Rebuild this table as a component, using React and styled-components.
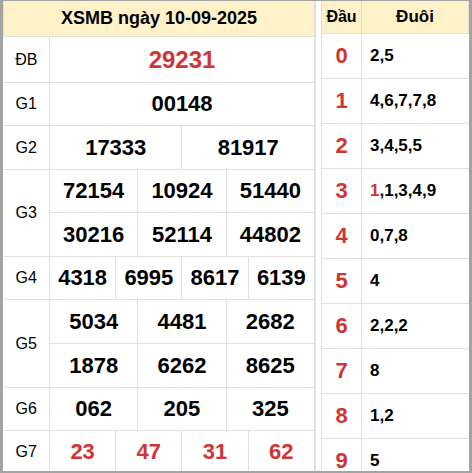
import React from "react";
import styled, { createGlobalStyle } from "styled-components";

const GlobalStyle = createGlobalStyle`
  html, body {
    margin: 0;
    padding: 0;
    background: #fff;
  }
  body {
    font-family: "Liberation Sans", Arial, sans-serif;
    color: #000;
  }
`;

const Frame = styled.div`
  box-sizing: border-box;
  width: 472px;
  height: 473px;
  overflow: hidden;
  border-style: solid;
  border-color: #a3a3a3;
  border-width: 1px 3px 2px 3px;
  display: flex;
  align-items: flex-start;
  gap: 5px;
  background: #fff;
`;

const LeftPanel = styled.div`
  width: 312px;
  flex: none;
  border-right: 1px solid #e2dfda;
`;

const Table = styled.table`
  width: ${(p) => p.$width}px;
  table-layout: fixed;
  border-collapse: collapse;
  flex: none;
`;

const LabelCol = styled.col`
  width: ${(p) => p.$width}px;
`;

const HeadCell = styled.th`
  background: #fff2c8;
  height: ${(p) => p.$height}px;
  padding: 0;
  font-size: ${(p) => p.$size || 18}px;
  font-weight: 700;
  text-align: center;
  border: 1px solid #e2dfda;
  border-top: none;
`;

const Row = styled.tr`
  height: ${(p) => p.$height}px;
`;

const Label = styled.td`
  padding: 0;
  text-align: center;
  font-size: 16px;
  border: 1px solid #e2dfda;
  border-left: none;
`;

const Num = styled.td`
  padding: 0;
  text-align: center;
  font-size: ${(p) => (p.$special ? 24 : 22)}px;
  font-weight: 700;
  color: ${(p) => (p.$red ? "#d03434" : "#000")};
  border: 1px solid #e2dfda;
`;

const Head = styled.td`
  padding: 0;
  text-align: center;
  font-size: 22px;
  font-weight: 700;
  color: #d03434;
  border: 1px solid #e2dfda;
`;

const Tail = styled.td`
  padding: 0 0 0 8px;
  text-align: left;
  font-size: 17px;
  font-weight: 700;
  border: 1px solid #e2dfda;
  border-right: none;
`;

const Red = styled.span`
  color: #d03434;
`;

const prizes = [
  { label: "ĐB", lines: [["29231"]], heights: [46], special: true, red: true },
  { label: "G1", lines: [["00148"]], heights: [43] },
  { label: "G2", lines: [["17333", "81917"]], heights: [44] },
  {
    label: "G3",
    lines: [
      ["72154", "10924", "51440"],
      ["30216", "52114", "44802"],
    ],
    heights: [43, 44],
  },
  { label: "G4", lines: [["4318", "6995", "8617", "6139"]], heights: [43] },
  {
    label: "G5",
    lines: [
      ["5034", "4481", "2682"],
      ["1878", "6262", "8625"],
    ],
    heights: [44, 44],
  },
  { label: "G6", lines: [["062", "205", "325"]], heights: [43] },
  { label: "G7", lines: [["23", "47", "31", "62"]], heights: [43], red: true },
];

const tails = [
  "2,5",
  "4,6,7,7,8",
  "3,4,5,5",
  [<Red key="r">1</Red>, ",1,3,4,9"],
  "0,7,8",
  "4",
  "2,2,2",
  "8",
  "1,2",
  "5",
];

function ResultTable() {
  return (
    <Table $width={312}>
      <colgroup>
        <LabelCol $width={46} />
        {Array.from({ length: 12 }).map((_, i) => (
          <col key={i} />
        ))}
      </colgroup>
      <thead>
        <tr>
          <HeadCell colSpan={13} $height={35}>
            XSMB ngày 10-09-2025
          </HeadCell>
        </tr>
      </thead>
      <tbody>
        {prizes.map((p) =>
          p.lines.map((nums, li) => (
            <Row key={p.label + li} $height={p.heights[li]}>
              {li === 0 && <Label rowSpan={p.lines.length}>{p.label}</Label>}
              {nums.map((n, i) => (
                <Num key={i} colSpan={12 / nums.length} $red={p.red} $special={p.special}>
                  {n}
                </Num>
              ))}
            </Row>
          ))
        )}
      </tbody>
    </Table>
  );
}

function LotoTable() {
  return (
    <Table $width={148}>
      <colgroup>
        <LabelCol $width={40} />
        <col />
      </colgroup>
      <thead>
        <tr>
          <HeadCell $height={32} $size={16}>Đầu</HeadCell>
          <HeadCell $height={32} $size={17}>Đuôi</HeadCell>
        </tr>
      </thead>
      <tbody>
        {tails.map((t, i) => (
          <Row key={i} $height={45}>
            <Head>{i}</Head>
            <Tail>{t}</Tail>
          </Row>
        ))}
      </tbody>
    </Table>
  );
}

export default function App() {
  return (
    <>
      <GlobalStyle />
      <Frame>
        <LeftPanel>
          <ResultTable />
        </LeftPanel>
        <LotoTable />
      </Frame>
    </>
  );
}
